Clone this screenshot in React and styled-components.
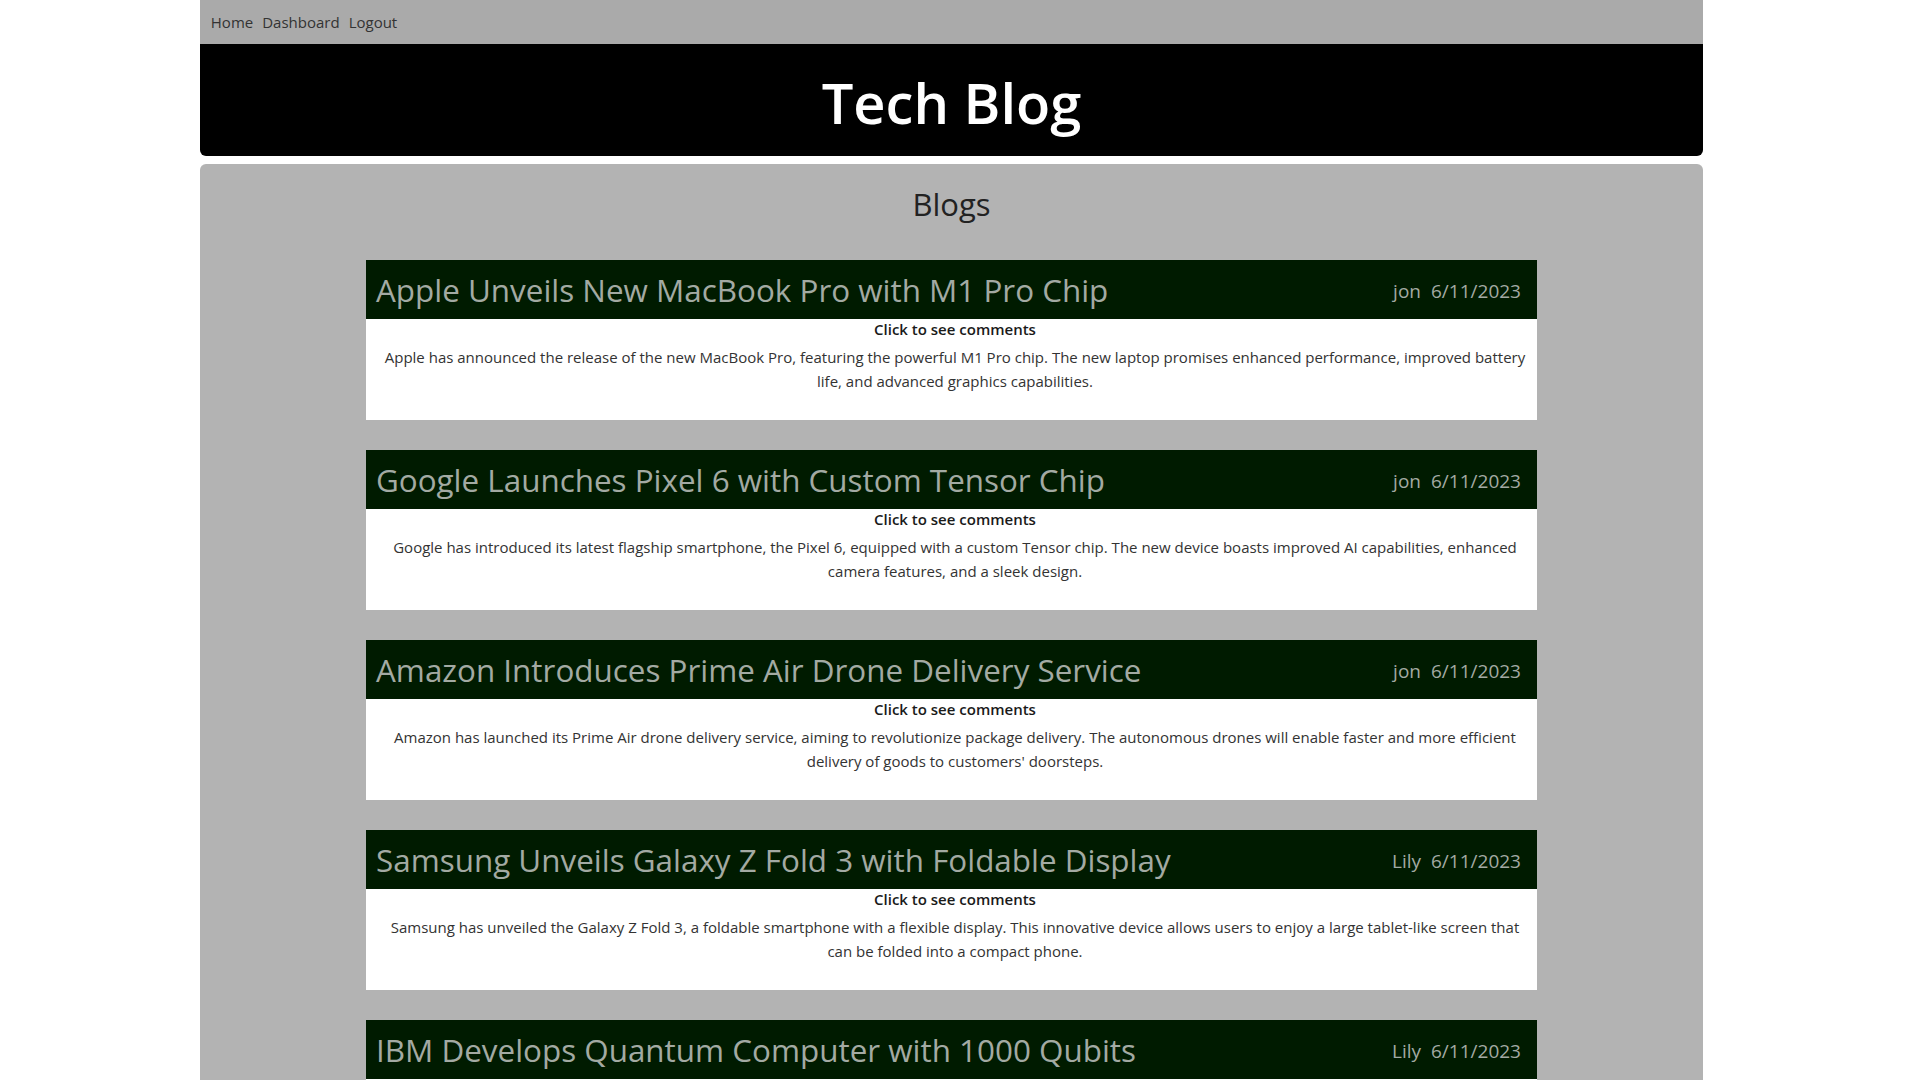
import React from 'react';
import styled, { createGlobalStyle } from 'styled-components';

const posts = [
  {
    title: 'Apple Unveils New MacBook Pro with M1 Pro Chip',
    author: 'jon',
    date: '6/11/2023',
    body: 'Apple has announced the release of the new MacBook Pro, featuring the powerful M1 Pro chip. The new laptop promises enhanced performance, improved battery life, and advanced graphics capabilities.',
  },
  {
    title: 'Google Launches Pixel 6 with Custom Tensor Chip',
    author: 'jon',
    date: '6/11/2023',
    body: 'Google has introduced its latest flagship smartphone, the Pixel 6, equipped with a custom Tensor chip. The new device boasts improved AI capabilities, enhanced camera features, and a sleek design.',
  },
  {
    title: 'Amazon Introduces Prime Air Drone Delivery Service',
    author: 'jon',
    date: '6/11/2023',
    body: "Amazon has launched its Prime Air drone delivery service, aiming to revolutionize package delivery. The autonomous drones will enable faster and more efficient delivery of goods to customers' doorsteps.",
  },
  {
    title: 'Samsung Unveils Galaxy Z Fold 3 with Foldable Display',
    author: 'Lily',
    date: '6/11/2023',
    body: 'Samsung has unveiled the Galaxy Z Fold 3, a foldable smartphone with a flexible display. This innovative device allows users to enjoy a large tablet-like screen that can be folded into a compact phone.',
  },
  {
    title: 'IBM Develops Quantum Computer with 1000 Qubits',
    author: 'Lily',
    date: '6/11/2023',
    body: 'IBM has developed a quantum computer with 1000 qubits, marking a major milestone in quantum computing. The breakthrough could accelerate research in chemistry, materials science, and cryptography.',
  },
  {
    title: 'Microsoft Releases Windows 11 with Redesigned Interface',
    author: 'Lily',
    date: '6/11/2023',
    body: 'Microsoft has released Windows 11, featuring a redesigned Start menu, new multitasking tools, and improved performance for gaming and productivity.',
  },
  {
    title: 'Tesla Expands Full Self-Driving Beta Program',
    author: 'jon',
    date: '6/11/2023',
    body: 'Tesla has expanded its Full Self-Driving beta program to more drivers, bringing advanced driver-assistance features to a wider audience.',
  },
  {
    title: 'NVIDIA Announces New GeForce RTX Graphics Cards',
    author: 'jon',
    date: '6/11/2023',
    body: 'NVIDIA has announced its new lineup of GeForce RTX graphics cards, delivering faster ray tracing and AI-powered performance for gamers and creators.',
  },
];

const BlogCard = ({ post }) => (
  <Card>
    <CardHeader>
      <CardTitle>{post.title}</CardTitle>
      <Meta>
        <span>{post.author}</span>
        <span>{post.date}</span>
      </Meta>
    </CardHeader>
    <CardBody>
      <CommentsLink>Click to see comments</CommentsLink>
      <Content>{post.body}</Content>
    </CardBody>
  </Card>
);

const App = () => (
  <>
    <GlobalStyle />
    <Page>
      <Nav>
        <NavLink>Home</NavLink>
        <NavLink>Dashboard</NavLink>
        <NavLink>Logout</NavLink>
      </Nav>
      <Header>
        <SiteTitle>Tech Blog</SiteTitle>
      </Header>
      <Main>
        <Heading>Blogs</Heading>
        <List>
          {posts.map(post => (
            <BlogCard key={post.title} post={post} />
          ))}
        </List>
      </Main>
    </Page>
  </>
);

export default App;

const GlobalStyle = createGlobalStyle`
  body {
    margin: 0 17px 0 0;
    background: #fff;
    color: #212529;
    font-family: 'Segoe UI', 'Open Sans', 'Noto Sans', sans-serif;
    font-size: 16px;
    line-height: 1.5;
  }
`;

const Page = styled.div`
  width: 79%;
  margin: 0 auto;
`;

const Nav = styled.nav`
  display: flex;
  align-items: center;
  gap: 9px;
  height: 44px;
  padding: 0 11px;
  background: #aaaaaa;
`;

const NavLink = styled.a`
  color: #333;
  font-size: 15px;
  cursor: pointer;
`;

const Header = styled.header`
  display: flex;
  justify-content: center;
  align-items: center;
  height: 112px;
  padding-top: 6px;
  box-sizing: border-box;
  background: #000;
  border-radius: 0 0 6px 6px;
`;

const SiteTitle = styled.h1`
  margin: 0;
  color: #fff;
  font-size: 56px;
  font-weight: 600;
  line-height: 1.2;
`;

const Main = styled.main`
  margin-top: 8px;
  padding: 22px 0 108px;
  background: #b3b3b3;
  border-radius: 6px 6px 0 0;
`;

const Heading = styled.h2`
  margin: 0 0 37px;
  text-align: center;
  color: #222;
  font-size: 31px;
  font-weight: 500;
  line-height: 1.2;
`;

const List = styled.div`
  display: flex;
  flex-direction: column;
  align-items: center;
  gap: 30px;
`;

const Card = styled.article`
  width: 1171px;
  background: #fff;
`;

const CardHeader = styled.div`
  display: flex;
  justify-content: space-between;
  align-items: center;
  height: 59px;
  padding: 0 16px 0 10px;
  background: #001b00;
  color: #a3aaa3;
`;

const CardTitle = styled.h3`
  margin: 0;
  font-size: 31.4px;
  font-weight: 500;
  line-height: 1.2;
`;

const Meta = styled.div`
  display: flex;
  gap: 10px;
  padding-top: 3px;
  font-size: 19px;
  font-weight: 500;
`;

const CardBody = styled.div`
  padding: 0 7px 27px 14px;
  text-align: center;
`;

const CommentsLink = styled.div`
  color: #1a1a1a;
  font-size: 15px;
  font-weight: 600;
  line-height: 20px;
  cursor: pointer;
`;

const Content = styled.p`
  margin: 6px 0 0;
  color: #333;
  font-size: 15px;
  line-height: 24px;
`;
